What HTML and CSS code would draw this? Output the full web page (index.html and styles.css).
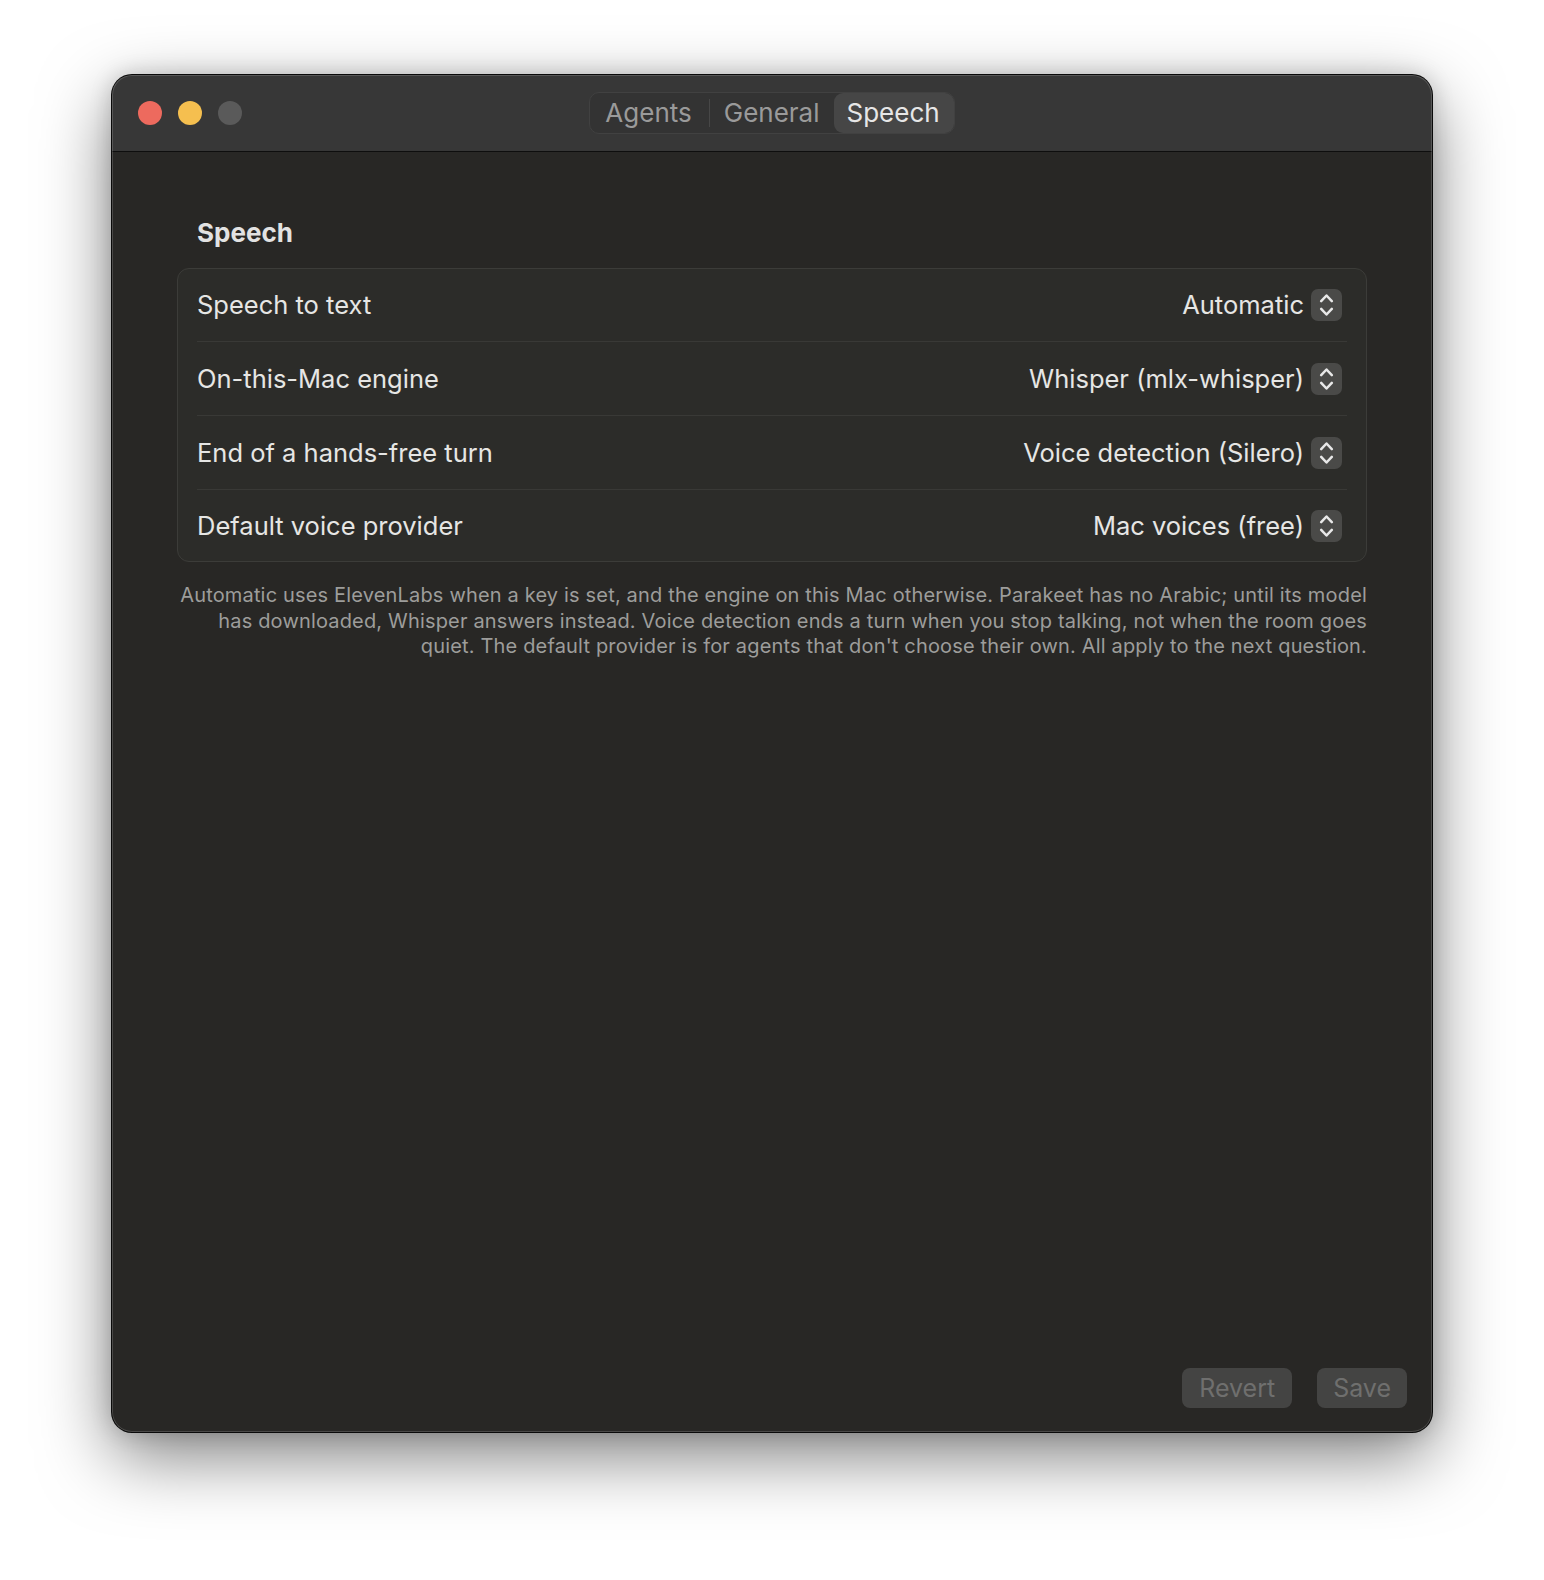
FILE: index.html
```html
<!DOCTYPE html>
<html lang="en">
<head>
    <meta charset="UTF-8">
    <meta name="viewport" content="width=device-width, initial-scale=1.0">
    <title>Settings — Speech</title>
    <link rel="stylesheet" href="styles.css">
</head>
<body>
    <div class="window">
        <div class="titlebar">
            <div class="lights">
                <span class="light close"></span>
                <span class="light minimize"></span>
                <span class="light zoom"></span>
            </div>
            <div class="tabs">
                <span class="tab first">Agents</span>
                <span class="tab-sep"></span>
                <span class="tab">General</span>
                <span class="tab selected">Speech</span>
            </div>
            <div></div>
        </div>

        <div class="content">
            <h2 class="section-title">Speech</h2>

            <div class="card">
                <div class="row">
                    <span class="label">Speech to text</span>
                    <span class="picker">Automatic <span class="stepper"><svg viewBox="0 0 32 32" width="32" height="32"><path d="M10.5 12 16 6.2 21.5 12M10.5 20 16 25.8 21.5 20"/></svg></span></span>
                </div>
                <div class="row">
                    <span class="label">On-this-Mac engine</span>
                    <span class="picker">Whisper (mlx-whisper) <span class="stepper"><svg viewBox="0 0 32 32" width="32" height="32"><path d="M10.5 12 16 6.2 21.5 12M10.5 20 16 25.8 21.5 20"/></svg></span></span>
                </div>
                <div class="row">
                    <span class="label">End of a hands-free turn</span>
                    <span class="picker">Voice detection (Silero) <span class="stepper"><svg viewBox="0 0 32 32" width="32" height="32"><path d="M10.5 12 16 6.2 21.5 12M10.5 20 16 25.8 21.5 20"/></svg></span></span>
                </div>
                <div class="row">
                    <span class="label">Default voice provider</span>
                    <span class="picker">Mac voices (free) <span class="stepper"><svg viewBox="0 0 32 32" width="32" height="32"><path d="M10.5 12 16 6.2 21.5 12M10.5 20 16 25.8 21.5 20"/></svg></span></span>
                </div>
            </div>

            <p class="note">Automatic uses ElevenLabs when a key is set, and the engine on this Mac otherwise. Parakeet has no Arabic; until its model<br>has downloaded, Whisper answers instead. Voice detection ends a turn when you stop talking, not when the room goes<br>quiet. The default provider is for agents that don't choose their own. All apply to the next question.</p>
        </div>

        <div class="actions">
            <button class="btn" disabled>Revert</button>
            <button class="btn save" disabled>Save</button>
        </div>
    </div>
</body>
</html>
```

FILE: styles.css
```css
html, body {
    margin: 0;
    background: #ffffff;
}
body {
    padding: 75px 0 148px;
    font-family: Inter, "Noto Sans", sans-serif;
}
.window {
    position: relative;
    width: 1320px;
    height: 1357px;
    margin: 0 auto;
    box-sizing: border-box;
    border-radius: 20px;
    background: #282725;
    display: flex;
    flex-direction: column;
    overflow: hidden;
    box-shadow: 0 0 0 1px #0a0a0a, 0 24px 70px rgba(0,0,0,0.5), 0 0 22px rgba(0,0,0,0.18);
}
.window::after {
    content: "";
    position: absolute;
    inset: 0;
    border-radius: 20px;
    box-shadow: inset 0 0 0 1px rgba(255,255,255,0.16);
    pointer-events: none;
}
.titlebar {
    height: 76px;
    flex: none;
    background: #373737;
    border-bottom: 1px solid #0e0e0e;
    display: grid;
    grid-template-columns: 1fr auto 1fr;
    align-items: center;
}
.lights {
    display: flex;
    gap: 16px;
    padding-left: 26px;
}
.light {
    width: 24px;
    height: 24px;
    border-radius: 50%;
}
.close { background: #ed6a5e; }
.minimize { background: #f5bf4f; }
.zoom { background: #5a5a5a; }
.tabs {
    display: flex;
    align-items: center;
    height: 40px;
    border: 1px solid #414141;
    border-radius: 10px;
    background: #333333;
    font-size: 26px;
    color: #9a9a9a;
}
.tab {
    height: 40px;
    line-height: 40px;
    padding: 0 14px;
}
.tab.first {
    padding: 0 17px 0 15px;
}
.tab-sep {
    width: 1px;
    height: 28px;
    background: #474747;
}
.tab.selected {
    background: #464646;
    color: #e6e6e6;
    border-radius: 9px;
    padding: 0 14px 0 13px;
}
.content {
    flex: 1;
    padding: 65px 65px 0;
}
.section-title {
    margin: 0 0 19px 20px;
    font-size: 26px;
    line-height: 32px;
    font-weight: 700;
    color: #e2e2e2;
}
.card {
    border: 1px solid #3c3c39;
    border-radius: 12px;
    background: #2c2c29;
    padding: 0 19px 0 19px;
}
.row {
    height: 74px;
    display: flex;
    align-items: center;
    justify-content: space-between;
    border-top: 1px solid #393936;
    box-sizing: border-box;
}
.row:first-child {
    border-top: none;
    height: 72px;
}
.row:last-child {
    height: 72px;
}
.label, .picker {
    font-size: 25.5px;
    line-height: 32px;
    color: #e6e6e4;
}
.picker {
    display: flex;
    align-items: center;
    gap: 7px;
    padding-right: 5px;
}
.stepper {
    width: 31px;
    height: 32px;
    border-radius: 7px;
    background: #4a4a48;
    display: flex;
    align-items: center;
    justify-content: center;
}
.stepper svg path {
    fill: none;
    stroke: #e8e8e8;
    stroke-width: 2.6;
    stroke-linecap: round;
    stroke-linejoin: round;
}
.note {
    margin: 21px 0 0;
    text-align: right;
    font-size: 20px;
    line-height: 25.7px;
    color: #9d9d9b;
    letter-spacing: 0.17px;
}
.actions {
    display: flex;
    justify-content: flex-end;
    gap: 25px;
    padding: 0 25px 24px;
}
.btn {
    height: 40px;
    padding: 0 17px;
    border: none;
    border-radius: 8px;
    background: #444443;
    color: #6f6f6e;
    font-family: Inter, "Noto Sans", sans-serif;
    font-size: 25px;
}
.btn.save {
    padding: 0 16px;
}
```
